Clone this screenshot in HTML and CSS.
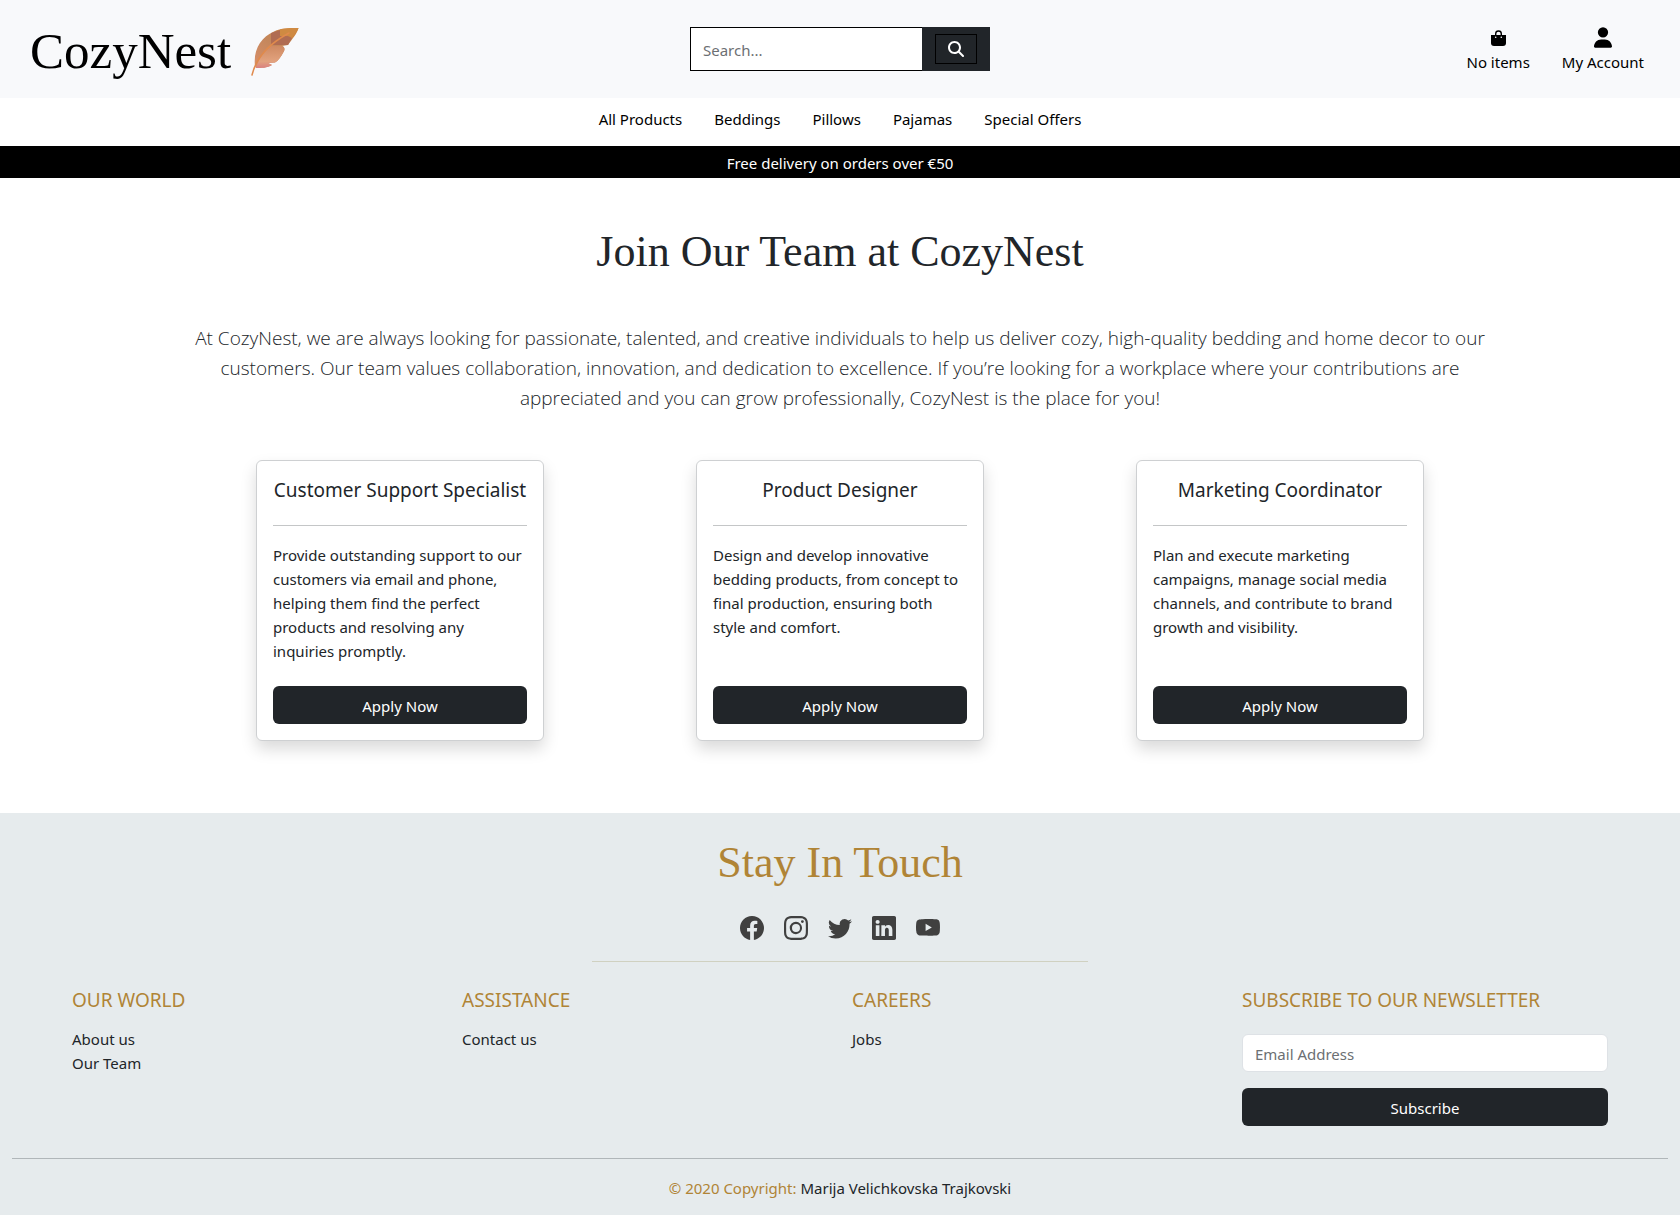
FILE: index.html
```html
<!DOCTYPE html>
<html lang="en">
<head>
<meta charset="utf-8">
<meta name="viewport" content="width=device-width, initial-scale=1">
<title>CozyNest - Join Our Team</title>
<link rel="stylesheet" href="styles.css">
</head>
<body>
<header class="site-header">
  <a class="brand" href="#">
    <span class="brand-name">CozyNest</span>
    <svg class="brand-feather" viewBox="0 0 48 48" aria-hidden="true">
      <defs>
        <linearGradient id="vane" x1="0" y1="1" x2="1" y2="0">
          <stop offset="0" stop-color="#d98f6a"/>
          <stop offset=".5" stop-color="#c4875c"/>
          <stop offset="1" stop-color="#cf8438"/>
        </linearGradient>
        <linearGradient id="vane-low" x1="0" y1="0" x2="0" y2="1">
          <stop offset="0" stop-color="#cf8a62"/>
          <stop offset=".7" stop-color="#e2a27e"/>
          <stop offset="1" stop-color="#d98080"/>
        </linearGradient>
      </defs>
      <path fill="url(#vane)" d="M4 38C2 22 10 9 23 3.500C30 0 38 0 47.500 0C46 6 41 11 37 17L31 18C34 19 34 22 32.500 24C30 29 27 33 24 34.500L17 35L21 37C16 40 10 40 5 40Z"/>
      <path fill="#b06c52" d="M20 5L29 2V7L38 6L41 10L37 17H20L20 14Z"/>
      <path fill="#cf8a42" d="M29 1.500C34 0 40 0 47.500 0C46 4 43 7 41 10L37 8L29 8Z"/>
      <path fill="url(#vane-low)" d="M20 18L31 18C34 19 34 22 32.500 24C30 29 27 33 24 34.500L17 35L21 37C16 40 10 40 5 40C8 30 13 23 20 18Z"/>
      <path fill="none" stroke="#e08a4c" stroke-width="1.500" stroke-linecap="round" d="M1 47C4 34 14 18 38 5"/>
    </svg>
  </a>
  <form class="search" role="search">
    <input class="search-input" type="search" placeholder="Search..." aria-label="Search">
    <div class="search-addon">
      <button class="search-button" type="button" aria-label="Submit search">
        <svg class="icon-search" viewBox="0 0 512 512" fill="#fff" aria-hidden="true"><path d="M416 208c0 45.900-14.900 88.300-40 122.700L502.600 457.400c12.500 12.500 12.500 32.800 0 45.300s-32.800 12.500-45.300 0L330.700 376c-34.400 25.200-76.800 40-122.700 40C93.100 416 0 322.900 0 208S93.100 0 208 0S416 93.100 416 208zM208 352a144 144 0 1 0 0-288 144 144 0 1 0 0 288z"/></svg>
      </button>
    </div>
  </form>
  <nav class="account" aria-label="Account">
    <a class="account-link" href="#">
      <svg class="icon-bag" viewBox="0 0 15 16" aria-hidden="true"><path fill="none" stroke="#000" stroke-width="1.400" d="M4.700 7V3.800a2.800 2.800 0 0 1 5.600 0V7"/><path d="M0 5h15v8a3 3 0 0 1-3 3H3a3 3 0 0 1-3-3z"/><circle cx="4.700" cy="7.300" r=".8" fill="#fff"/><circle cx="10.300" cy="7.300" r=".8" fill="#fff"/></svg>
      <span>No items</span>
    </a>
    <a class="account-link" href="#">
      <svg class="icon-user" viewBox="0 0 448 512" aria-hidden="true"><path d="M224 256A128 128 0 1 0 224 0a128 128 0 1 0 0 256zm-45.700 48C79.800 304 0 383.800 0 482.300C0 498.700 13.300 512 29.700 512H418.300c16.400 0 29.700-13.300 29.700-29.700C448 383.800 368.200 304 269.700 304H178.300z"/></svg>
      <span>My Account</span>
    </a>
  </nav>
</header>
<nav class="main-nav" aria-label="Products">
  <a href="#">All Products</a>
  <a href="#">Beddings</a>
  <a href="#">Pillows</a>
  <a href="#">Pajamas</a>
  <a href="#">Special Offers</a>
</nav>
<div class="banner">Free delivery on orders over €50</div>
<main class="container">
  <h1 class="display-title">Join Our Team at CozyNest</h1>
  <p class="lead">At CozyNest, we are always looking for passionate, talented, and creative individuals to help us deliver cozy, high-quality bedding and home decor to our customers. Our team values collaboration, innovation, and dedication to excellence. If you’re looking for a workplace where your contributions are appreciated and you can grow professionally, CozyNest is the place for you!</p>
  <div class="jobs">
    <article class="card">
      <h2 class="card-title">Customer Support Specialist</h2>
      <p class="card-text">Provide outstanding support to our customers via email and phone, helping them find the perfect products and resolving any inquiries promptly.</p>
      <button class="button" type="button">Apply Now</button>
    </article>
    <article class="card">
      <h2 class="card-title">Product Designer</h2>
      <p class="card-text">Design and develop innovative bedding products, from concept to final production, ensuring both style and comfort.</p>
      <button class="button" type="button">Apply Now</button>
    </article>
    <article class="card">
      <h2 class="card-title">Marketing Coordinator</h2>
      <p class="card-text">Plan and execute marketing campaigns, manage social media channels, and contribute to brand growth and visibility.</p>
      <button class="button" type="button">Apply Now</button>
    </article>
  </div>
</main>
<footer class="site-footer">
  <h2 class="display-title">Stay In Touch</h2>
  <div class="social">
    <a href="#" aria-label="Facebook"><svg viewBox="0 0 16 16" aria-hidden="true"><path d="M16 8.049c0-4.446-3.582-8.050-8-8.050C3.580 0-.002 3.603-.002 8.050c0 4.017 2.926 7.347 6.750 7.951v-5.625h-2.030V8.050H6.750V6.275c0-2.017 1.195-3.131 3.022-3.131.876 0 1.791.157 1.791.157v1.980h-1.009c-.993 0-1.303.621-1.303 1.258v1.510h2.218l-.354 2.326H9.250V16c3.824-.604 6.750-3.934 6.750-7.951"/></svg></a>
    <a href="#" aria-label="Instagram"><svg viewBox="0 0 16 16" aria-hidden="true"><path d="M8 0C5.829 0 5.556.01 4.703.048 3.850.088 3.269.222 2.760.420a3.900 3.900 0 0 0-1.417.923A3.900 3.900 0 0 0 .420 2.760C.222 3.268.087 3.850.048 4.700.01 5.555 0 5.827 0 8.001c0 2.172.01 2.444.048 3.297.04.852.174 1.433.372 1.942.205.526.478.972.923 1.417.444.445.890.719 1.416.923.510.198 1.090.333 1.942.372C5.555 15.990 5.827 16 8 16s2.444-.01 3.298-.048c.851-.04 1.434-.174 1.943-.372a3.900 3.900 0 0 0 1.416-.923c.445-.445.718-.891.923-1.417.197-.509.332-1.090.372-1.942C15.990 10.445 16 10.173 16 8s-.01-2.445-.048-3.299c-.04-.851-.175-1.433-.372-1.941a3.900 3.900 0 0 0-.923-1.417A3.900 3.900 0 0 0 13.240.420c-.510-.198-1.092-.333-1.943-.372C10.443.01 10.172 0 7.998 0zm-.717 1.442h.718c2.136 0 2.389.007 3.232.046.780.035 1.204.166 1.486.275.373.145.640.319.920.599s.453.546.598.920c.110.281.240.705.275 1.485.039.843.047 1.096.047 3.231s-.008 2.389-.047 3.232c-.035.780-.166 1.203-.275 1.485a2.500 2.500 0 0 1-.599.919c-.280.280-.546.453-.920.598-.280.110-.704.240-1.485.276-.843.038-1.096.047-3.232.047s-2.390-.009-3.233-.047c-.780-.036-1.203-.166-1.485-.276a2.500 2.500 0 0 1-.920-.598 2.500 2.500 0 0 1-.600-.920c-.109-.281-.240-.705-.275-1.485-.038-.843-.046-1.096-.046-3.233s.008-2.388.046-3.231c.036-.780.166-1.204.276-1.486.145-.373.319-.640.599-.920s.546-.453.920-.598c.282-.110.705-.240 1.485-.276.738-.034 1.024-.044 2.515-.045zm4.988 1.328a.960.960 0 1 0 0 1.920.960.960 0 0 0 0-1.920m-4.270 1.122a4.109 4.109 0 1 0 0 8.217 4.109 4.109 0 0 0 0-8.217m0 1.441a2.667 2.667 0 1 1 0 5.334 2.667 2.667 0 0 1 0-5.334"/></svg></a>
    <a href="#" aria-label="Twitter"><svg viewBox="0 0 16 16" aria-hidden="true"><path d="M5.026 15c6.038 0 9.341-5.003 9.341-9.334q.002-.211-.006-.422A6.700 6.700 0 0 0 16 3.542a6.700 6.700 0 0 1-1.889.518 3.300 3.300 0 0 0 1.447-1.817 6.500 6.500 0 0 1-2.087.793A3.286 3.286 0 0 0 7.875 6.030a9.320 9.320 0 0 1-6.767-3.429 3.290 3.290 0 0 0 1.018 4.382A3.300 3.300 0 0 1 .640 6.575v.045a3.290 3.290 0 0 0 2.632 3.218 3.200 3.200 0 0 1-.865.115 3 3 0 0 1-.614-.057 3.280 3.280 0 0 0 3.067 2.277A6.600 6.600 0 0 1 .780 13.580a6 6 0 0 1-.780-.045A9.340 9.340 0 0 0 5.026 15"/></svg></a>
    <a href="#" aria-label="LinkedIn"><svg viewBox="0 0 16 16" aria-hidden="true"><path d="M0 1.146C0 .513.526 0 1.175 0h13.650C15.474 0 16 .513 16 1.146v13.708c0 .633-.526 1.146-1.175 1.146H1.175C.526 16 0 15.487 0 14.854zm4.943 12.248V6.169H2.542v7.225zm-1.200-8.212c.837 0 1.358-.554 1.358-1.248-.015-.709-.520-1.248-1.342-1.248S2.400 3.226 2.400 3.934c0 .694.521 1.248 1.327 1.248zm4.908 8.212V9.359c0-.216.016-.432.080-.586.173-.431.568-.878 1.232-.878.869 0 1.216.662 1.216 1.634v3.865h2.401V9.250c0-2.220-1.184-3.252-2.764-3.252-1.274 0-1.845.700-2.165 1.193v.025h-.016l.016-.025V6.169h-2.400c.030.678 0 7.225 0 7.225z"/></svg></a>
    <a href="#" aria-label="YouTube"><svg viewBox="0 0 16 16" aria-hidden="true"><path d="M8.051 1.999h.089c.822.003 4.987.033 6.110.335a2.010 2.010 0 0 1 1.415 1.420c.101.380.172.883.220 1.402l.022.260.008.104c.065.914.073 1.770.074 1.957v.075c-.001.194-.010 1.108-.082 2.060l-.008.105-.009.104c-.050.572-.124 1.140-.235 1.558a2.010 2.010 0 0 1-1.415 1.420c-1.160.312-5.569.334-6.180.335h-.142c-.309 0-1.587-.006-2.927-.052l-.170-.006c-1.239-.051-2.454-.130-3.012-.277a2.010 2.010 0 0 1-1.415-1.419c-.111-.417-.185-.986-.235-1.558L.090 9.820l-.008-.104A31 31 0 0 1 0 7.680v-.123c.002-.215.010-.958.064-1.778l.007-.103.003-.052.008-.104.022-.260c.048-.519.119-1.023.220-1.402a2.010 2.010 0 0 1 1.415-1.420c.487-.130 1.544-.210 2.654-.260L6.200 2.070A100 100 0 0 1 7.858 2zM6.400 5.209v4.818l4.157-2.408z"/></svg></a>
  </div>
  <hr class="social-rule">
  <div class="footer-columns">
    <section>
      <h3 class="footer-title">OUR WORLD</h3>
      <ul class="footer-links"><li><a href="#">About us</a></li><li><a href="#">Our Team</a></li></ul>
    </section>
    <section>
      <h3 class="footer-title">ASSISTANCE</h3>
      <ul class="footer-links"><li><a href="#">Contact us</a></li></ul>
    </section>
    <section>
      <h3 class="footer-title">CAREERS</h3>
      <ul class="footer-links"><li><a href="#">Jobs</a></li></ul>
    </section>
    <section>
      <h3 class="footer-title">SUBSCRIBE TO OUR NEWSLETTER</h3>
      <form class="newsletter">
        <input class="newsletter-input" type="email" placeholder="Email Address" aria-label="Email Address">
        <button class="button" type="button">Subscribe</button>
      </form>
    </section>
  </div>
  <p class="copyright">© 2020 Copyright: <a href="#">Marija Velichkovska Trajkovski</a></p>
</footer>
</body>
</html>
```
FILE: styles.css
```css
*, *::before, *::after { box-sizing: border-box; }

body {
  margin: 0;
  font: 15px/24px "Noto Sans", sans-serif;
  color: #212529;
  background: #fff;
}

a { color: inherit; text-decoration: none; }
h1, h2, h3, p, ul { margin: 0; padding: 0; font-weight: 400; }
input, button { font: inherit; }
svg { display: block; }

.site-header {
  display: grid;
  grid-template-columns: 1fr 300px 1fr;
  align-items: center;
  min-height: 98px;
  padding: 0 30px;
  background: #f8f9fb;
  color: #000;
}

.brand { display: flex; align-items: center; gap: 20px; }
.brand-name { padding-top: 3px; font: 51px/60px "Liberation Serif", serif; }
.brand-feather { width: 48px; height: 48px; margin-top: 6px; }

.search { display: flex; height: 44px; }
.search-input {
  flex: 1;
  min-width: 0;
  padding: 2px 12px 0;
  border: 1px solid #000;
  border-right: 0;
  border-radius: 0;
  background: #fff;
  outline: 0;
}
.search-addon {
  display: flex;
  align-items: center;
  padding: 0 13px;
  background: #212529;
}
.search-button {
  display: grid;
  place-items: center;
  width: 42px;
  height: 30px;
  padding: 0;
  border: 1px solid #000;
  background: #212529;
}
.icon-search { width: 16px; height: 16px; }
input::placeholder { color: #6c6f73; opacity: 1; }

.account { display: flex; justify-content: flex-end; gap: 32px; padding: 3px 6px 0 0; }
.account-link {
  display: flex;
  flex-direction: column;
  align-items: center;
  justify-content: flex-end;
  gap: 2px;
}
.icon-bag { width: 15px; height: 16px; margin-bottom: 2px; }
.icon-user { width: 18px; height: 21px; }

.main-nav {
  display: flex;
  justify-content: center;
  gap: 32px;
  padding: 9px 0 15px;
  color: #000;
}
.banner {
  padding: 5px 0 3px;
  background: #000;
  color: #fff;
  text-align: center;
}

.container { max-width: 1320px; margin: 0 auto; padding: 48px 0 72px; }
.display-title {
  font: 44px/51px "Liberation Serif", serif;
  text-align: center;
}
.lead {
  padding: 0 12px;
  margin: 46px 0 47px;
  font: 300 19px/30px "Open Sans", "Noto Sans", sans-serif;
  text-align: center;
}

.jobs { display: grid; grid-template-columns: repeat(3, 1fr); justify-items: center; }
.card {
  display: flex;
  flex-direction: column;
  width: 288px;
  padding: 16px;
  border: 1px solid #ced0d2;
  border-radius: 6px;
  background: #fff;
  box-shadow: 0 8px 16px rgba(0, 0, 0, .15);
}
.card-title {
  padding: 1px 0 23px;
  margin-bottom: 17px;
  border-bottom: 1px solid #c4c6c7;
  font-size: 19px;
  text-align: center;
  white-space: nowrap;
}
.card-text { margin-bottom: 23px; }
.button {
  width: 100%;
  height: 38px;
  margin-top: auto;
  padding: 2px 12px 0;
  border: 0;
  border-radius: 6px;
  background: #212529;
  color: #fff;
}

.site-footer { padding: 24px 12px 15px; background: #e6ebed; }
.site-footer .display-title { color: #b08436; }
.social {
  display: flex;
  justify-content: center;
  gap: 20px;
  margin: 28px 0 21px;
  color: #404040;
}
.social svg { width: 24px; height: 24px; fill: currentColor; }
.social-rule {
  width: 30%;
  margin: 0 auto;
  border: 0;
  border-top: 1px solid #d0d1c1;
}
.footer-columns {
  display: grid;
  grid-template-columns: repeat(4, 1fr);
  gap: 24px;
  padding: 26px 60px 32px;
  border-bottom: 1px solid #b0b6b9;
}
.footer-title { margin-bottom: 15px; font-size: 19px; color: #b08436; }
.footer-links { list-style: none; }
.newsletter { display: grid; gap: 16px; padding-top: 7px; }
.newsletter-input {
  width: 100%;
  height: 38px;
  padding: 2px 12px 0;
  border: 1px solid #dee2e6;
  border-radius: 6px;
  background: #fff;
}
.copyright { padding-top: 17px; text-align: center; color: #b08436; }
.copyright a { color: #212529; }
```
